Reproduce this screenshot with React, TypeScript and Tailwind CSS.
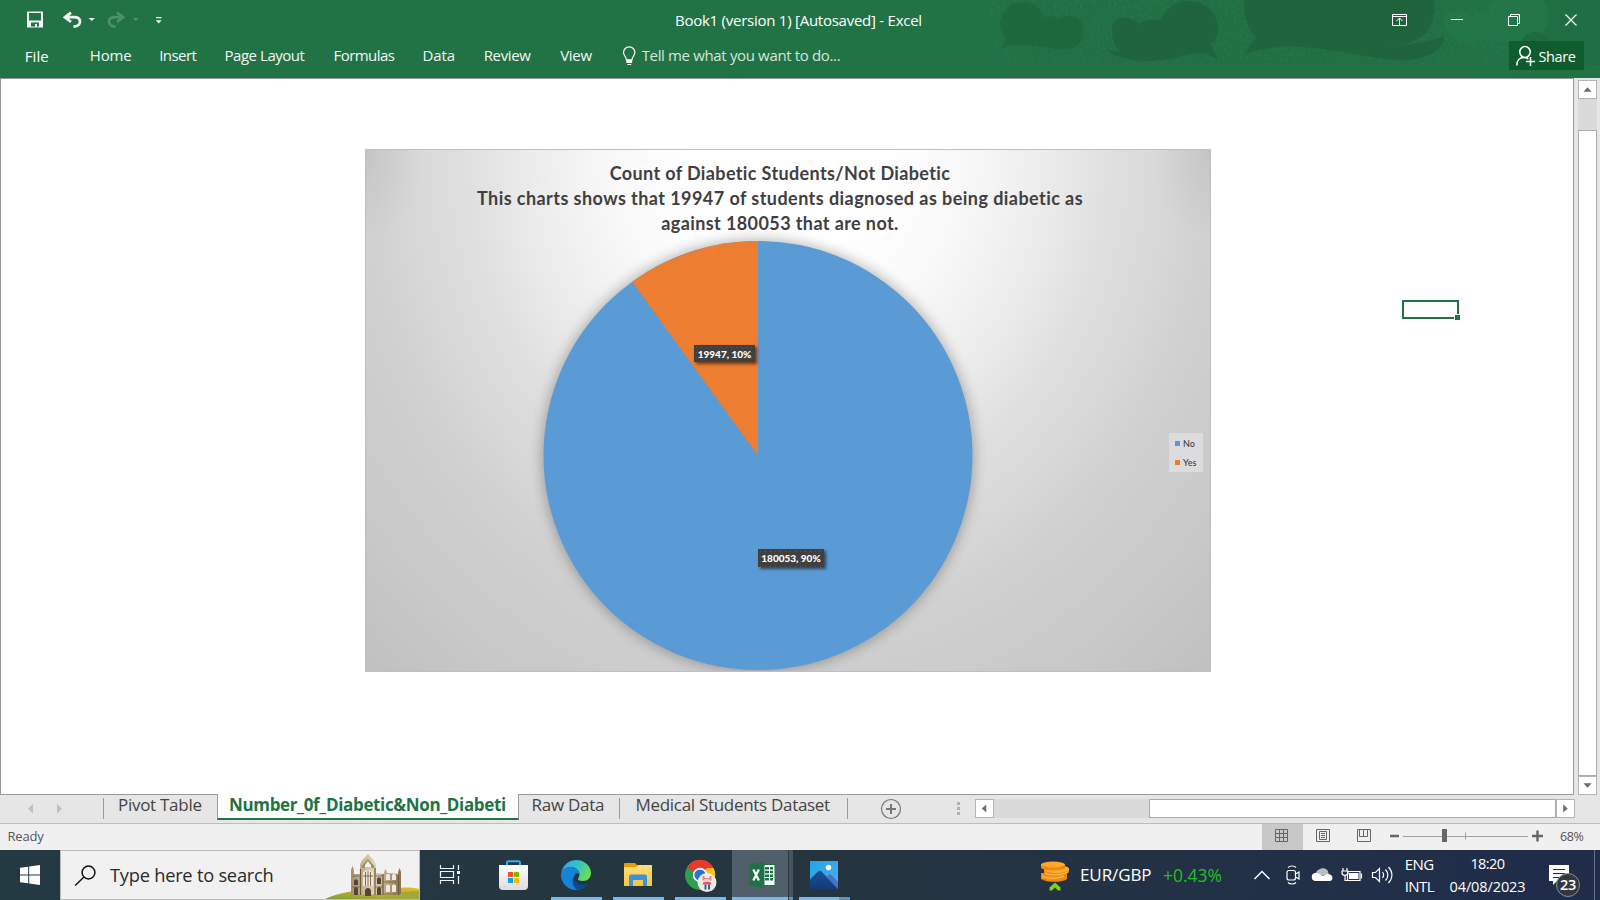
import React from 'react';

function HeaderArt() {
  return (
    <svg className="absolute left-[960px] top-0" width="640" height="65" viewBox="0 0 640 65">
      <defs>
        <linearGradient id="artBase" x1="0" x2="1" y1="0" y2="0">
          <stop offset="0" stopColor="#1f6c42" stopOpacity="0" />
          <stop offset=".12" stopColor="#1f6c42" stopOpacity=".5" />
          <stop offset=".7" stopColor="#1f6c42" stopOpacity=".55" />
          <stop offset=".85" stopColor="#1f6c42" stopOpacity=".2" />
          <stop offset="1" stopColor="#1f6c42" stopOpacity=".9" />
        </linearGradient>
        <filter id="grain" x="0" y="0" width="100%" height="100%">
          <feTurbulence type="fractalNoise" baseFrequency=".35" numOctaves="2" seed="4" />
          <feColorMatrix values="0 0 0 0 .1  0 0 0 0 .36  0 0 0 0 .22  0 0 0 1.6 -.75" />
        </filter>
      </defs>
      <rect width="640" height="65" fill="url(#artBase)" />
      <rect x="30" width="540" height="65" filter="url(#grain)" opacity=".22" />
      <path d="M40 25C40 10 51 2 63 2s20 8 20 16c7-3 12-2 16 1 10-6 24-2 24 10 0 14-5 20-20 20-20 0-38-9-62-1 3-5 5-9 4-12-4-4-5-7-5-11Z" fill="#1e663c" opacity=".8" />
      <path d="M152 30c0-10 8-14 16-12 5 1 9 3 11 7 5-6 10-6 23-5C205 8 215 1 229 1c17 0 29 12 29 28 0 7-3 12-7 15l7 16c-12-8-20-8-32-5-18 6-45 9-65 2-8-2-13-5-14-8 4 1 9 3 13 2-6-5-8-12-8-21Z" fill="#1f643c" />
      <path d="M284 0h190c2 20-5 36-23 42-8 3-18 3-28 3 25 1 42-3 61-8 1 8-10 18-25 21-26 5-50-2-77-6-32-5-62-10-97 2 4-6 7-13 11-16-8-8-12-22-12-38Z" fill="#1f643c" />
      <path d="M486 14c8-6 18-4 25 2 6-4 12-5 17-1 1-6 3-11 6-15h50c6 11 6 24-2 34-4 5-9 7-14 7h-70c-12-5-18-18-12-27Z" fill="#237748" opacity=".8" />
      <path d="M562 43c1-7 6-11 13-11s13 4 14 11Z" fill="#1f6a3f" />
    </svg>
  );
}

function TitleBar() {
  return (
    <div className="relative flex h-[41px] items-center text-white">
      <svg className="ml-[26px]" width="140" height="20" viewBox="26 10.500 140 20">
        <path d="M27 11h16v16H27Z" fill="#f3f3f3" />
        <path d="M29 12.500h12v7.500H29ZM31 22h8v4h-2v-2.500h-2V26h-4Z" fill="#217346" />
        <path d="M71 12.200 65 16.700l6 4.800M65.500 16.700h8.500c4 0 6 2 6 4.500s-2.500 4.800-6.500 4.800" fill="none" stroke="#f3f3f3" strokeWidth="2.800" />
        <path d="M88.500 17.500h6.500l-3.200 3Z" fill="#f3f3f3" />
        <path d="M117 12.200l6 4.500-6 4.800M122.500 16.700H115c-4 0-6 2-6 4.500s2.500 4.800 6.500 4.800" fill="none" stroke="#4d9168" strokeWidth="2.800" />
        <path d="M132.500 17.500h6.500l-3.200 3Z" fill="#4d9168" />
        <path d="M156 16.500h5.500v1.200H156ZM155.700 19.800h6l-3 3.200Z" fill="#f3f3f3" />
      </svg>
      <div className="ml-[509px] w-[259px] whitespace-nowrap text-[15px] tracking-[-0.25px]">Book1 (version 1) [Autosaved] - Excel</div>
      <svg className="ml-[456px] -mt-[2px]" width="190" height="15" viewBox="1390 11 190 15" fill="none" stroke="#fff">
        <path d="M1392.500 13.500h14v11h-14ZM1392.500 15.500h14M1399.500 24v-7M1396.500 20l3-3 3 3" />
        <path d="M1451 18.500h12" />
        <path d="M1508.500 15.500h9v9h-9ZM1510.500 15.500v-2h9v9h-2" />
        <path d="m1565.500 13.500 11 11M1576.500 13.500l-11 11" strokeWidth="1.200" />
      </svg>
    </div>
  );
}

function RibbonTabs() {
  return (
    <div className="relative flex h-[29px] items-center whitespace-nowrap pl-[24.700px] text-[15px] text-[#f1f7f3]">
      <div className="w-[65px] pt-[1px] tracking-[0.1px] text-white">File</div>
      <div className="w-[69.500px] tracking-[-0.1px]">Home</div>
      <div className="w-[65.300px] tracking-[-0.55px]">Insert</div>
      <div className="w-[109px] tracking-[-0.46px]">Page Layout</div>
      <div className="w-[89px] tracking-[-0.55px]">Formulas</div>
      <div className="w-[61.200px] tracking-[-0.12px]">Data</div>
      <div className="w-[76.500px] tracking-[-0.35px]">Review</div>
      <div className="w-[62px] tracking-[-0.27px]">View</div>
      <svg width="14" height="20" viewBox="622 46 14 20">
        <path d="M626.500 60c0-3-3-4.500-3-7.500a5.700 5.700 0 0 1 11.400 0c0 3-3 4.500-3 7.500Z" fill="none" stroke="#fff" strokeWidth="1.200" />
        <path d="M626.300 59.500h5.800V63h-5.800ZM627.300 64h3.800v1h-3.800Z" fill="#fff" />
      </svg>
      <div className="ml-[5.500px] tracking-[-0.35px] text-[#d5e6dc]">Tell me what you want to do...</div>
      <div className="absolute right-[16px] top-0 flex h-[29px] w-[75px] items-center bg-[#0f5c2f] pl-[6px] text-white">
        <svg width="22" height="22" viewBox="1515 44 22 22" fill="none" stroke="#fff" strokeWidth="1.500">
          <ellipse cx="1525" cy="51" rx="5.200" ry="5.500" />
          <path d="M1516.800 64.500c0-5 3-8 7-8 2 0 3.500.5 4.500 1.500M1530.500 56v9M1526 60.500h9" />
        </svg>
        <div className="ml-[1.500px] pt-[2px] text-[14.500px] tracking-[-0.4px]">Share</div>
      </div>
    </div>
  );
}

function DataLabel({ children, place }: { children: React.ReactNode; place: string }) {
  return (
    <div className={`absolute flex items-center justify-center whitespace-nowrap bg-[#404040] bg-[radial-gradient(#5a5a5a_0.7px,transparent_0.9px)] bg-[length:5px_5px] font-[Lato] text-[10px] font-black text-white shadow-[2px_2px_3px_rgba(0,0,0,0.55)] ${place}`}>
      {children}
    </div>
  );
}

function Chart() {
  return (
    <div className="relative h-[523px] w-[846px] overflow-hidden border border-[#bfbfbf] bg-[radial-gradient(ellipse_60px_90px_at_0%_0%,rgba(0,0,0,0.06),transparent),radial-gradient(ellipse_60px_90px_at_100%_0%,rgba(0,0,0,0.06),transparent),radial-gradient(ellipse_50%_92%_at_50%_0%,#ffffff_22%,#f9f9f9_40%,#f1f1f1_54%,#dfdfdf_77%,#d1d1d1_100%,#c0c0c0_148%)]">
      <svg className="absolute left-0 top-0" width="844" height="521" viewBox="366 150 844 521">
        <defs>
          <filter id="pieGlow" x="-20%" y="-20%" width="140%" height="140%">
            <feGaussianBlur stdDeviation="7" />
          </filter>
        </defs>
        <circle cx="758" cy="455.500" r="215.500" fill="#000" opacity=".3" filter="url(#pieGlow)" />
        <circle cx="758" cy="455.500" r="214.500" fill="#5b9bd5" />
        <path d="M758 455.500V241A214.500 214.500 0 0 0 632.200 281.800Z" fill="#ed7d31" />
      </svg>
      <div className="relative mt-[10.500px] flex flex-col items-center pr-[16px] font-[Lato] text-[18px] font-bold leading-[25px] text-[#404040]">
        <div className="whitespace-nowrap tracking-[0.37px]">Count of Diabetic Students/Not Diabetic</div>
        <div className="whitespace-nowrap tracking-[0.44px]">This charts shows that 19947 of students diagnosed as being diabetic as</div>
        <div className="whitespace-nowrap tracking-[0.4px]">against 180053 that are not.</div>
      </div>
      <DataLabel place="left-[328px] top-[195px] h-[17px] w-[61px] pt-[2px]">19947, 10%</DataLabel>
      <DataLabel place="left-[392px] top-[399px] h-[18px] w-[66px]">180053, 90%</DataLabel>
      <div className="absolute left-[803px] top-[283px] flex h-[39px] w-[34px] flex-col justify-center bg-[#dcdcdc] pl-[6px] font-[Lato] text-[9px] font-medium leading-[19px] text-[#404040]">
        <div className="flex items-center gap-[3px]"><span className="h-[5px] w-[5px] bg-[#5b9bd5]" />No</div>
        <div className="flex items-center gap-[3px]"><span className="h-[5px] w-[5px] bg-[#ed7d31]" />Yes</div>
      </div>
    </div>
  );
}

function ScrollButton({ d, size }: { d: string; size: string }) {
  return (
    <div className={`flex shrink-0 items-center justify-center border border-[#b4b4b4] bg-white ${size}`}>
      <svg width="9" height="9" viewBox="0 0 10 10"><path d={d} fill="#6b6b6b" /></svg>
    </div>
  );
}

function Workspace() {
  return (
    <div className="flex h-[717px] bg-[#e6e6e6]">
      <div className="relative w-[1574px] border border-[#999] bg-white pl-[364px] pt-[70px]">
        <Chart />
        <div className="absolute left-[1401px] top-[221px] h-[19px] w-[57px] border-2 border-[#217346]">
          <div className="absolute -bottom-[4px] -right-[4px] h-[7px] w-[7px] border border-white bg-[#217346]" />
        </div>
      </div>
      <div className="ml-[4px] flex w-[19px] flex-col pt-[2px]">
        <ScrollButton d="M5 2.500 9.500 7.500H.5Z" size="h-[19px] w-[19px]" />
        <div className="h-[31px] bg-[#dadada]" />
        <div className="h-[646px] border border-[#ababab] bg-white" />
        <ScrollButton d="M5 7.500 9.500 2.500H.5Z" size="h-[19px] w-[19px]" />
      </div>
    </div>
  );
}

function SheetTabs() {
  return (
    <div className="flex h-[28px] whitespace-nowrap bg-[#e6e6e6] text-[17px] leading-[20px] text-[#444]">
      <svg width="103" height="28" viewBox="0 795 103 28">
        <path d="M33 804v9.500l-5-4.700ZM57 804v9.500l5-4.700Z" fill="#c0c0c0" />
      </svg>
      <div className="mt-[3px] h-[21px] w-px bg-[#999]" />
      <div className="w-[113px] pl-[14px] tracking-[-0.28px]">Pivot Table</div>
      <div className="relative -mt-px h-[26px] w-[302px] border-x border-b-2 border-x-[#999] border-b-[#217346] bg-white pl-[11px] pt-px font-bold tracking-[-0.35px] text-[#217346]">Number_0f_Diabetic&amp;Non_Diabeti</div>
      <div className="w-[100px] pl-[12.500px] tracking-[-0.28px]">Raw Data</div>
      <div className="mt-[3px] h-[21px] w-px bg-[#999]" />
      <div className="w-[227px] pl-[15.500px] tracking-[-0.3px]">Medical Students Dataset</div>
      <div className="mt-[3px] h-[21px] w-px bg-[#999]" />
      <svg width="127" height="28" viewBox="848 795 127 28">
        <circle cx="891" cy="809" r="9.500" fill="none" stroke="#777" strokeWidth="1.200" />
        <path d="M886 809h10M891 804v10" stroke="#777" strokeWidth="2" />
        <path d="M957 802h3v3h-3ZM957 807h3v3h-3ZM957 812h3v3h-3Z" fill="#b0b0b0" />
      </svg>
      <div className="mt-[4px] flex h-[19px]">
        <ScrollButton d="M2 5 7 .5V9.500Z" size="h-[19px] w-[19px]" />
        <div className="w-[155px] bg-[#dadada]" />
        <div className="w-[407px] border border-[#ababab] bg-white" />
        <ScrollButton d="M7.500 5 2.500 .5V9.500Z" size="h-[19px] w-[19px]" />
      </div>
    </div>
  );
}

function StatusBar() {
  return (
    <div className="flex h-[27px] items-center border-t border-[#bcbcbc] bg-[#f0f0f0] text-[13px] text-[#555]">
      <div className="w-[1262px] pl-[7.500px] tracking-[-0.2px]">Ready</div>
      <div className="h-full w-[41px] bg-[#c8c8c8]">
        <svg width="41" height="26" viewBox="1262 824 41 26" fill="none" stroke="#666"><path d="M1275.500 829.500h12v12h-12ZM1275.500 833.500h12M1275.500 837.500h12M1279.500 829.500v12M1283.500 829.500v12" /></svg>
      </div>
      <svg width="257" height="26" viewBox="1303 824 257 26" fill="none" stroke="#666">
        <path d="M1316.500 829.500h13v12h-13ZM1319.500 831.500h7v8h-7ZM1321 833.500h4M1321 835.500h4M1321 837.500h4" />
        <path d="M1357.500 829.500h13v12h-13ZM1359.500 829.500v7h8v-7M1363.500 829.500v7" />
        <path d="M1390 836h9M1532 836h11M1537.500 830.500v11" strokeWidth="2.400" />
        <path d="M1403 836.500h125M1465.500 832.500v7" stroke="#a0a0a0" />
        <path d="M1442 829h5v13h-5Z" fill="#666" stroke="none" />
      </svg>
      <div className="text-[12.500px] tracking-[-0.4px]">68%</div>
    </div>
  );
}

function Abbey() {
  return (
    <svg className="ml-auto" width="96" height="48" viewBox="324 851 96 48">
      <defs>
        <linearGradient id="hill" x1="0" x2="1" y1="1" y2="0"><stop offset="0" stopColor="#7d9c33" /><stop offset=".5" stopColor="#b6ad33" /><stop offset="1" stopColor="#e8b92c" /></linearGradient>
        <linearGradient id="stone" x1="0" x2="1" y1="0" y2="0"><stop offset="0" stopColor="#a58f6b" /><stop offset=".45" stopColor="#e0d3b5" /><stop offset="1" stopColor="#8c7250" /></linearGradient>
      </defs>
      <path d="M324 900c20-10 42-11 62-10 12-3 24-3 34-1v11Z" fill="url(#hill)" />
      <path d="M378 900c14-6 26-9 42-9v9Z" fill="#a3a83a" />
      <path d="M352 895v-25l1.500-4 1.500 4v4h6v-9l1.500-4 6.500-7 6.500 7 1.500 4v8l8 1v-2l1.500-3 1.500 3v1l11 1v-2l1.500-4 1.500 4v22Z" fill="url(#stone)" />
      <path d="M363 866l6-7 6 7v2h-2l-4-6-4 6h-2Z" fill="#9c8763" />
      <path d="M366 865l3-4 3 4v2h-6Z" fill="#f1f1f1" />
      <path d="M364 886v-12c0-5 10-5 10 0v12ZM387 880v-4c0-3 4-3 4 0v4ZM393 880v-4c0-3 4-3 4 0v4ZM387 892v-6c0-2 4-2 4 0v6ZM393 892v-6c0-2 4-2 4 0v6Z" fill="#ede8e2" />
      <path d="M366.500 886v-14M369 886v-15M371.500 886v-14M364 876h10" stroke="#77603f" strokeWidth=".9" />
      <path d="M366 896v-5c0-4 6-4 6 0v5ZM355 895v-6c0-3 4-3 4 0v6ZM355 885v-4c0-2 4-2 4 0v4ZM378 895v-6c0-3 4-3 4 0v6ZM378 884v-5c0-2 4-2 4 0v5Z" fill="#56452f" />
      <path d="M361.500 895v-26M376 895v-27M384 895v-21M399.500 895v-20" stroke="#6d583a" strokeWidth="1.200" />
      <path d="M353 876h8M376 876h8M353 887h8M376 887h8M385 882h15M385 894h16" stroke="#7e6848" strokeWidth=".8" />
    </svg>
  );
}

function TaskIcons() {
  return (
    <svg width="440" height="50" viewBox="420 850 440 50">
      <defs>
        <linearGradient id="bag" x1="0" x2="0" y1="0" y2="1"><stop offset="0" stopColor="#fff" /><stop offset="1" stopColor="#dcdcdc" /></linearGradient>
        <linearGradient id="edgeTop" x1="0" x2="1" y1=".2" y2=".6"><stop offset="0" stopColor="#2fa9e2" /><stop offset=".5" stopColor="#35c4c9" /><stop offset="1" stopColor="#6be04a" /></linearGradient>
        <linearGradient id="edgeBody" x1="0" x2=".6" y1="0" y2="1"><stop offset="0" stopColor="#2b9fe6" /><stop offset="1" stopColor="#0a63bd" /></linearGradient>
        <linearGradient id="folder" x1="0" x2="0" y1="0" y2="1"><stop offset="0" stopColor="#ffdf7d" /><stop offset="1" stopColor="#f9c440" /></linearGradient>
        <linearGradient id="sky" x1="0" x2="1" y1="0" y2="1"><stop offset="0" stopColor="#1ea6e8" /><stop offset="1" stopColor="#54a9ea" /></linearGradient>
        <linearGradient id="peak" x1="0" x2="0" y1="0" y2="1"><stop offset="0" stopColor="#1c4f96" /><stop offset="1" stopColor="#123a78" /></linearGradient>
      </defs>
      <path d="M732 850h56v50h-56Z" fill="#505f69" /><path d="M788 850h1v50h-1Z" fill="#2b3841" /><path d="M789 850h4v50h-4Z" fill="#47545e" />
      <path d="M551 897h51v3h-51ZM613 897h51v3h-51ZM675 897h51v3h-51ZM732 897h56v3h-56ZM799 897h40v3h-40Z" fill="#76b9ed" />
      <path d="M789 897h4v3h-4ZM839 897h11v3h-11Z" fill="#5f93bf" />
      <path d="M440.500 865v3.500h13V865M440.500 884v-3.500h13V884M440.500 871.500h13v6h-13ZM458.500 865v5M458.500 876v8" fill="none" stroke="#f4f4f4" strokeWidth="1.200" />
      <path d="M457 871h3v3h-3Z" fill="#fff" />
      <path d="M507 867v-4.500a1.200 1.200 0 0 1 1.200-1.200h10.600a1.200 1.200 0 0 1 1.200 1.200v4.500" fill="none" stroke="#2bb3ea" strokeWidth="2" />
      <path d="M499 865h29v21a4 4 0 0 1-4 4h-21a4 4 0 0 1-4-4Z" fill="url(#bag)" />
      <path d="M508 872h5v5h-5Z" fill="#f25022" /><path d="M514 872h5v5h-5Z" fill="#7fba00" /><path d="M508 878h5v5h-5Z" fill="#00a4ef" /><path d="M514 878h5v5h-5Z" fill="#ffb900" />
      <path d="M561 875a15 15 0 0 0 26.500 9.500c-8 3-14-1-14-6 0-2 1-3 2-4-1-5-6-8-14.500.5Z" fill="url(#edgeBody)" />
      <path d="M561.200 873C563 864 570 860 576 860c9 0 15 6.500 15 13 0 5-3.500 8-8 8-3.500 0-5-1-5-2s1.500-2 1.500-4.500c0-4-4-7.500-9-7.500-4 0-8 2.500-9.300 6Z" fill="url(#edgeTop)" />
      <path d="M561 874c1-5 5-7 9.500-7 5 0 9 3.500 9 7.500-2-2-5-1.500-6.500.5-3 4-2 11 3.500 15-9 0-15.500-7-15.500-16Z" fill="#1682d8" />
      <path d="M573.500 876c-2 5 0 13 5.500 13.500 4-.6 7-2.500 9-5.500-8 2.500-14.500-2-14.500-8Z" fill="#0c4a8f" />
      <path d="M624 864a1 1 0 0 1 1-1h10l3 3v3h-14Z" fill="#e2a006" />
      <path d="M624 867h12l2-2h14v21h-28Z" fill="url(#folder)" />
      <path d="M629 876.500a2 2 0 0 1 2-2h14a2 2 0 0 1 2 2V886h-4v-6h-10v6h-4Z" fill="#3a94dc" />
      <circle cx="700" cy="875" r="15" fill="#2e9f4f" />
      <path d="M700 875 687 867.500A15 15 0 0 1 715 875Z" fill="#e63a2e" />
      <path d="M700 875l7-7h6.500a15 15 0 0 1-12.500 22Z" fill="#fcc21b" />
      <path d="M687 867.500a15 15 0 0 1 26-.5h-13Z" fill="#e63a2e" />
      <circle cx="700" cy="875" r="7.200" fill="#fff" /><circle cx="700" cy="875" r="5.600" fill="#2a70e0" />
      <circle cx="707" cy="882.500" r="9.500" fill="#ecece2" />
      <path d="M702.500 876h2v2h5v-2h2v4.500h-9Z" fill="#e0888b" /><path d="M704.500 879h5v3h-5Z" fill="#f6c9c5" /><path d="M703.500 882h7l1 2.500h-9Z" fill="#dd5961" /><path d="M704.500 884.500h2v5h-2ZM708 884.500h2v5h-2Z" fill="#415a9e" />
      <path d="M764 864.500h11v21h-11Z" fill="#fff" stroke="#1e7244" strokeWidth="1" />
      <path d="M765 867h4v2.500h-4ZM770 867h3v2.500h-3ZM765 870.700h4v2.500h-4ZM770 870.700h3v2.500h-3ZM765 874.400h4v2.500h-4ZM770 874.400h3v2.500h-3ZM765 878.100h4v2.500h-4ZM770 878.100h3v2.500h-3Z" fill="#1e7244" />
      <path d="M749 864.500 764 862v26l-15-2.500Z" fill="#1e7244" />
      <path d="m753.300 869.500 5.600 11M758.900 869.500l-5.600 11" stroke="#fff" strokeWidth="2.200" />
      <path d="M810 861h28v28h-28Z" fill="url(#sky)" />
      <path d="M824 882l7-7 7 8v6h-14Z" fill="#6f7fd6" />
      <path d="M810 879.500l8-8c1-1 2.500-1 3.500 0L838 889h-28Z" fill="url(#peak)" />
      <path d="M826 877l2.500-2c1-.8 2-.8 3 0l6.500 7v7Z" fill="#3f66b8" opacity=".7" />
      <circle cx="828.500" cy="867.500" r="2.700" fill="#fff" />
    </svg>
  );
}

function Taskbar() {
  return (
    <div className="flex h-[50px] whitespace-nowrap bg-linear-to-r from-[#243a42] via-[#24353f] via-50% to-[#202c4b]">
      <div className="flex w-[60px] items-center justify-center">
        <svg width="20" height="20" viewBox="0 0 20 20" fill="#fff"><path d="M0 2.800 8.200 1.700V9.500H0ZM9.200 1.500 20 0v9.500H9.200ZM0 10.500h8.200v7.800L0 17.200ZM9.200 10.500H20V20L9.200 18.500Z" /></svg>
      </div>
      <div className="flex w-[360px] items-center border border-[#b9b9b9] bg-[#f1f1f1] text-[18.300px] text-[#2b2b2b]">
        <svg className="ml-[13px]" width="23" height="23" viewBox="74 863 23 23" fill="none" stroke="#111" strokeWidth="1.500"><circle cx="88.500" cy="871.500" r="6.400" /><path d="M84 876l-8.800 8.500" /></svg>
        <div className="ml-[13px] tracking-[-0.25px]">Type here to search</div>
        <Abbey />
      </div>
      <TaskIcons />
      <svg width="220" height="50" viewBox="860 850 220 50">
        <path d="M1041 873h26v6c-4 3.500-20 4-26 0Z" fill="#e8850f" />
        <ellipse cx="1053" cy="876.500" rx="12" ry="4" fill="#f28f16" />
        <path d="M1044 868h25v4c-3 4-20 5-25 1Z" fill="#ef8d17" />
        <ellipse cx="1056.500" cy="869" rx="12.500" ry="4" fill="#ffad33" />
        <path d="M1041 864h24v4c-4 3.500-20 3.500-24 0Z" fill="#ee8811" />
        <ellipse cx="1053" cy="864.500" rx="12" ry="3" fill="#ffa62b" />
        <path d="M1042 876c4 3 16 3 22 0M1045 873c5 3 18 2 23-1" stroke="#ffbd55" fill="none" />
        <path d="M1049.500 887.500l5.500-5 5.500 5v3h-2.500l-3-3-3 3h-2.500Z" fill="#7bd11b" />
      </svg>
      <div className="w-[83px] text-[17px] leading-[50px] tracking-[-0.1px] text-white">EUR/GBP</div>
      <div className="w-[79px] text-[17.500px] leading-[50px] text-[#1fc01f]">+0.43%</div>
      <svg width="162" height="50" viewBox="1242 850 162 50" fill="none" stroke="#fff" strokeWidth="1.200">
        <path d="m1254.500 879 7.500-7.500 7.500 7.500" strokeWidth="1.400" />
        <rect x="1287" y="870.500" width="8.500" height="9.500" rx="2" /><path d="m1295.500 874 3.500-2v7l-3.500-2M1288 867.500c2-2 6-2 8 0M1288 882.500c2 2 6 2 8 0" />
        <path d="M1316 877a5.500 5.500 0 0 1 3-7.500c5-3 10 .5 9.500 4.500" fill="#b9bcc4" stroke="none" />
        <path d="M1316 881a4 4 0 0 1-.5-8c3 0 5 1 7 3l4-2c4-.5 6 1.500 6 4s-2 3-4 3Z" fill="#fff" stroke="none" />
        <path d="M1347.500 871.500h12.500v9h-12.500ZM1361.500 873.500v5" /><path d="M1349 873h9.500v6H1349Z" fill="#fff" stroke="none" /><path d="M1343 868v3M1347 868v3M1342 871h6v2c0 3-6 3-6 0ZM1345 875v5.500h2" />
        <path d="M1372.500 872.500h3l4-4v13l-4-4h-3ZM1382.500 872c1.500 2 1.500 4 0 6M1385.500 869.500c3 3.500 3 7.500 0 11M1388.500 867c4.500 5 4.500 11 0 16" />
      </svg>
      <div className="w-[46px] pl-[0.700px] pt-[3px] text-[15px] leading-[22px] text-white">
        <div className="tracking-[-0.5px]">ENG</div>
        <div className="tracking-[-0.6px]">INTL</div>
      </div>
      <div className="flex w-[75px] flex-col items-center pt-[2px] text-[14.500px] leading-[23px] text-white">
        <div className="tracking-[-0.55px]">18:20</div>
        <div className="tracking-[-0.1px]">04/08/2023</div>
      </div>
      <div className="relative h-[50px] w-[69px]">
        <svg className="absolute left-[24px] top-[15px]" width="20" height="20" viewBox="0 0 20 20"><path d="M0 0h20v16H8l-4 4v-4H0Z" fill="#fff" /><path d="M4 4.500h12M4 8.500h12M4 12.500h8" stroke="#202c4b" strokeWidth="1.200" /></svg>
        <div className="absolute left-[31px] top-[22.500px] flex h-[24px] w-[24px] items-center justify-center rounded-full border border-[#8b8f96] bg-[#33373e] text-[14.500px] font-semibold tracking-[-0.4px] text-white">23</div>
      </div>
      <div className="h-[50px] w-px bg-[#6a7284]" />
    </div>
  );
}

export default function App() {
  return (
    <div className="h-[900px] w-[1600px] overflow-hidden bg-white font-['Open_Sans',sans-serif]">
      <div className="relative h-[78px] bg-[#217346]">
        <HeaderArt />
        <TitleBar />
        <RibbonTabs />
      </div>
      <Workspace />
      <SheetTabs />
      <StatusBar />
      <Taskbar />
    </div>
  );
}
